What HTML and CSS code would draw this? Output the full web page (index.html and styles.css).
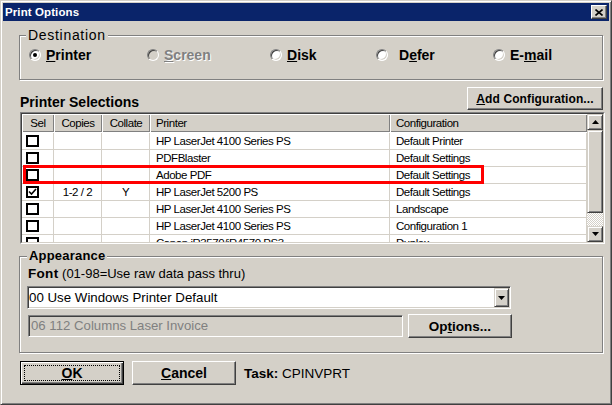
FILE: index.html
```html
<!DOCTYPE html>
<html>
<head>
<meta charset="utf-8">
<title>Print Options</title>
<link rel="stylesheet" href="styles.css">
</head>
<body>
<div class="window">
  <div class="titlebar">
    <span class="title">Print Options</span>
    <span class="close"><svg width="8" height="7" viewBox="0 0 8 7"><path d="M0.5 0.5L7.5 6.5M7.5 0.5L0.5 6.5" stroke="#000" stroke-width="1.6" fill="none"/></svg></span>
  </div>
  <div class="content">
    <div class="group dest">
      <span class="caption cap-dest">Destination</span>
      <div class="radios">
        <div class="radio"><span class="rb on"></span><span class="rl"><u>P</u>rinter</span></div>
        <div class="radio disabled"><span class="rb"></span><span class="rl"><u>S</u>creen</span></div>
        <div class="radio"><span class="rb"></span><span class="rl"><u>D</u>isk</span></div>
        <div class="radio"><span class="rb"></span><span class="rl rl-defer">D<u>e</u>fer</span></div>
        <div class="radio"><span class="rb"></span><span class="rl">E-<u>m</u>ail</span></div>
      </div>
    </div>

    <div class="sel-head">
      <span class="sel-title">Printer Selections</span>
      <button class="btn btn-add"><u>A</u>dd Configuration...</button>
    </div>

    <div class="table">
      <div class="table-in">
        <div class="list">
          <div class="thead">
            <div class="th center">Sel</div>
            <div class="th center">Copies</div>
            <div class="th center">Collate</div>
            <div class="th">Printer</div>
            <div class="th">Configuration</div>
          </div>
          <div class="tbody">
            <div class="tr"><div class="td sel"><span class="cb"></span></div><div class="td center"></div><div class="td center"></div><div class="td">HP LaserJet 4100 Series PS</div><div class="td">Default Printer</div></div>
            <div class="tr"><div class="td sel"><span class="cb"></span></div><div class="td center"></div><div class="td center"></div><div class="td">PDFBlaster</div><div class="td">Default Settings</div></div>
            <div class="tr"><div class="td sel"><span class="cb"></span></div><div class="td center"></div><div class="td center"></div><div class="td">Adobe PDF</div><div class="td">Default Settings</div></div>
            <div class="tr"><div class="td sel"><span class="cb"><svg width="9" height="8" viewBox="0 0 9 8"><path d="M1 3.5L3.5 6L8 1" stroke="#000" stroke-width="1.6" fill="none"/></svg></span></div><div class="td center">1-2 / 2</div><div class="td center">Y</div><div class="td">HP LaserJet 5200 PS</div><div class="td">Default Settings</div></div>
            <div class="tr"><div class="td sel"><span class="cb"></span></div><div class="td center"></div><div class="td center"></div><div class="td">HP LaserJet 4100 Series PS</div><div class="td">Landscape</div></div>
            <div class="tr"><div class="td sel"><span class="cb"></span></div><div class="td center"></div><div class="td center"></div><div class="td">HP LaserJet 4100 Series PS</div><div class="td">Configuration 1</div></div>
            <div class="tr"><div class="td sel"><span class="cb"></span></div><div class="td center"></div><div class="td center"></div><div class="td">Canon iR3570/iR4570 PS3</div><div class="td">Duplex</div></div>
          </div>
          <div class="highlight"></div>
        </div>
        <div class="scrollbar">
          <div class="sb-btn"><svg width="7" height="4" viewBox="0 0 7 4"><path d="M3.5 0L7 4H0Z" fill="#000"/></svg></div>
          <div class="sb-thumb"></div>
          <div class="sb-track"></div>
          <div class="sb-btn"><svg width="7" height="4" viewBox="0 0 7 4"><path d="M0 0H7L3.5 4Z" fill="#000"/></svg></div>
        </div>
      </div>
    </div>

    <div class="group appearance">
      <span class="caption cap-app">Appearance</span>
      <div class="font-line"><b>Font</b> (01-98=Use raw data pass thru)</div>
      <div class="combo">
        <span class="combo-text">00 Use Windows Printer Default</span>
        <span class="combo-btn"><svg width="7" height="4" viewBox="0 0 7 4"><path d="M0 0H7L3.5 4Z" fill="#000"/></svg></span>
      </div>
      <div class="opt-row">
        <div class="textbox">06 112 Columns Laser Invoice</div>
        <button class="btn btn-opt">Op<u>t</u>ions...</button>
      </div>
    </div>

    <div class="footer">
      <button class="btn btn-default"><span class="focus"><u>O</u>K</span></button>
      <button class="btn btn-cancel"><u>C</u>ancel</button>
      <span class="task"><b>Task:</b> CPINVPRT</span>
    </div>
  </div>
</div>
</body>
</html>
```
FILE: styles.css
```css
* { box-sizing: border-box; }
html, body { margin: 0; padding: 0; }
body {
  background: #d4d0c8;
  font-family: "Liberation Sans", Arial, sans-serif;
  color: #000;
}
.window {
  width: 612px;
  height: 405px;
  border: 1px solid;
  border-color: #d4d0c8 #404040 #404040 #d4d0c8;
  box-shadow: inset 1px 1px #fff, inset -1px -1px #808080;
  padding: 2px;
  background: #d4d0c8;
  overflow: hidden;
}
.titlebar {
  height: 18px;
  background: #0a246a;
  display: flex;
  align-items: center;
  justify-content: space-between;
  padding: 0 2px;
}
.title {
  color: #fff;
  font-weight: bold;
  font-size: 11.5px;
  letter-spacing: 0.1px;
}
.close {
  width: 16px;
  height: 14px;
  background: #d4d0c8;
  border: 1px solid;
  border-color: #fff #404040 #404040 #fff;
  box-shadow: inset -1px -1px #808080;
  display: flex;
  align-items: center;
  justify-content: center;
}
.close svg { display: block; }
.content { padding: 0 6px 0 16px; }

.group {
  position: relative;
  border: 1px solid #808080;
  box-shadow: 1px 1px 0 #fff, inset 1px 1px 0 #fff;
}
.caption {
  position: absolute;
  top: -8px;
  background: #d4d0c8;
  padding: 0 2px;
  line-height: 14px;
  white-space: nowrap;
}
.cap-dest { left: 6px; font-size: 14px; letter-spacing: 0.7px; }
.cap-app { left: 7px; font-size: 13px; font-weight: bold; letter-spacing: 0.2px; }

.dest {
  margin-top: 14px;
  height: 45px;
  padding: 11px 0 0 9px;
}
.radios {
  display: grid;
  grid-template-columns: 118px 123px 106px 117px auto;
  height: 16px;
  align-items: center;
}
.radio {
  display: flex;
  align-items: center;
  gap: 5px;
  font-size: 14px;
  font-weight: bold;
  white-space: nowrap;
}
.rl { line-height: 16px; }
.rl u { text-decoration-thickness: 1px; text-underline-offset: 1px; }
.rl-defer { margin-left: 6px; }
.rb {
  position: relative;
  width: 12px;
  height: 12px;
  border-radius: 50%;
  border: 1px solid;
  border-color: #808080 #fff #fff #808080;
  box-shadow: inset 1px 1px #404040, inset -1px -1px #d4d0c8;
  background: #fff;
  flex: none;
}
.rb.on::after {
  content: "";
  position: absolute;
  left: 3px;
  top: 3px;
  width: 4px;
  height: 4px;
  border-radius: 50%;
  background: #000;
}
.radio.disabled .rb { background: #d4d0c8; }
.radio.disabled .rl { color: #808080; text-shadow: 1px 1px 0 #fff; font-weight: bold; }

.sel-head {
  margin-top: 7px;
  height: 23px;
  display: flex;
  justify-content: space-between;
  align-items: flex-end;
}
.sel-title {
  margin-left: 1px;
  font-size: 14px;
  font-weight: bold;
  line-height: 16px;
}
.btn {
  background: #d4d0c8;
  border: 1px solid;
  border-color: #fff #404040 #404040 #fff;
  box-shadow: inset -1px -1px #808080;
  font-family: "Liberation Sans", Arial, sans-serif;
  color: #000;
  padding: 0;
  margin: 0;
  display: flex;
  align-items: center;
  justify-content: center;
  white-space: nowrap;
}
.btn u { text-decoration-thickness: 1px; text-underline-offset: 1px; }
.btn-add {
  width: 136px;
  height: 23px;
  font-size: 12px;
  font-weight: bold;
  letter-spacing: 0.1px;
}

.table {
  margin: 2px -2px 0 1px;
  height: 132px;
  border: 1px solid;
  border-color: #808080 #fff #fff #808080;
}
.table-in {
  height: 100%;
  border: 1px solid;
  border-color: #404040 #d4d0c8 #d4d0c8 #404040;
  display: flex;
}
.list {
  flex: 1;
  position: relative;
  overflow: hidden;
  background: #fff;
  font-family: "Liberation Sans", Arial, sans-serif;
  font-size: 11.5px;
  letter-spacing: -0.45px;
}
.thead, .tr {
  display: grid;
  grid-template-columns: 32px 48px 48px 240px 1fr;
}
.thead { height: 18px; }
.th {
  background: #d4d0c8;
  box-shadow: inset 1px 1px #fff, inset -1px -1px #808080;
  line-height: 18px;
  padding-left: 6px;
  white-space: nowrap;
}
.th.center { padding-left: 0; text-align: center; }
.tbody { padding-top: 1px; }
.tr {
  height: 17px;
  border-bottom: 1px solid #d4d0c8;
}
.td {
  border-right: 1px solid #d4d0c8;
  display: flex;
  align-items: center;
  padding-left: 6px;
  white-space: nowrap;
  overflow: hidden;
}
.td.center { justify-content: center; padding-left: 0; }
.td.sel { padding-left: 4px; }
.cb {
  width: 13px;
  height: 12px;
  border: 2px solid #000;
  background: #fff;
  display: flex;
  align-items: center;
  justify-content: center;
}
.cb svg { display: block; }
.highlight {
  position: absolute;
  left: 1px;
  top: 51px;
  width: 461px;
  height: 19px;
  border: 3px solid #ff0000;
}
.scrollbar {
  width: 16px;
  display: flex;
  flex-direction: column;
}
.sb-btn, .sb-thumb {
  background: #d4d0c8;
  border: 1px solid;
  border-color: #d4d0c8 #404040 #404040 #d4d0c8;
  box-shadow: inset 1px 1px #fff, inset -1px -1px #808080;
}
.sb-btn {
  height: 16px;
  display: flex;
  align-items: center;
  justify-content: center;
}
.sb-btn svg { display: block; }
.sb-thumb { height: 83px; }
.sb-track {
  flex: 1;
  background: repeating-conic-gradient(#fff 0 25%, #d4d0c8 0 50%) 0 0 / 2px 2px;
}

.appearance {
  margin-top: 12px;
  height: 97px;
  padding: 9px 0 0 7px;
}
.font-line {
  margin-left: 1px;
  font-size: 13px;
  line-height: 16px;
  white-space: nowrap;
}
.font-line b { font-size: 13.5px; letter-spacing: 0.3px; }
.combo {
  margin-top: 4px;
  width: 484px;
  height: 23px;
  border: 1px solid;
  border-color: #808080 #fff #fff #808080;
  box-shadow: inset 1px 1px #404040, inset -1px -1px #d4d0c8;
  background: #fff;
  padding: 1px;
  display: flex;
  align-items: center;
  justify-content: space-between;
}
.combo-text {
  font-size: 13.3px;
  line-height: 19px;
  white-space: nowrap;
}
.combo-btn {
  width: 15px;
  height: 19px;
  background: #d4d0c8;
  border: 1px solid;
  border-color: #d4d0c8 #404040 #404040 #d4d0c8;
  box-shadow: inset 1px 1px #fff, inset -1px -1px #808080;
  display: flex;
  align-items: center;
  justify-content: center;
}
.combo-btn svg { display: block; }
.opt-row {
  margin-top: 5px;
  height: 24px;
  display: flex;
  align-items: center;
  gap: 5px;
}
.textbox {
  margin-left: 1px;
  width: 375px;
  height: 22px;
  border: 1px solid;
  border-color: #808080 #fff #fff #808080;
  box-shadow: inset 1px 1px #404040, inset -1px -1px #d4d0c8;
  background: #d4d0c8;
  color: #808080;
  font-size: 13.2px;
  line-height: 20px;
  padding-left: 2px;
  white-space: nowrap;
}
.btn-opt {
  width: 104px;
  height: 24px;
  font-size: 13.5px;
  font-weight: bold;
}

.footer {
  margin-top: 8px;
  height: 24px;
  display: flex;
  align-items: center;
  gap: 8px;
  padding-left: 1px;
}
.btn-default, .btn-cancel {
  width: 104px;
  height: 24px;
  font-size: 14px;
  font-weight: bold;
}
.btn-default {
  border: 1px solid #000;
  box-shadow: inset 1px 1px #fff, inset -1px -1px #404040, inset -2px -2px #808080;
  padding: 3px;
}
.focus {
  flex: 1;
  height: 100%;
  border: 1px dotted #000;
  display: flex;
  align-items: center;
  justify-content: center;
}
.task {
  font-size: 13.5px;
  white-space: nowrap;
}
```
